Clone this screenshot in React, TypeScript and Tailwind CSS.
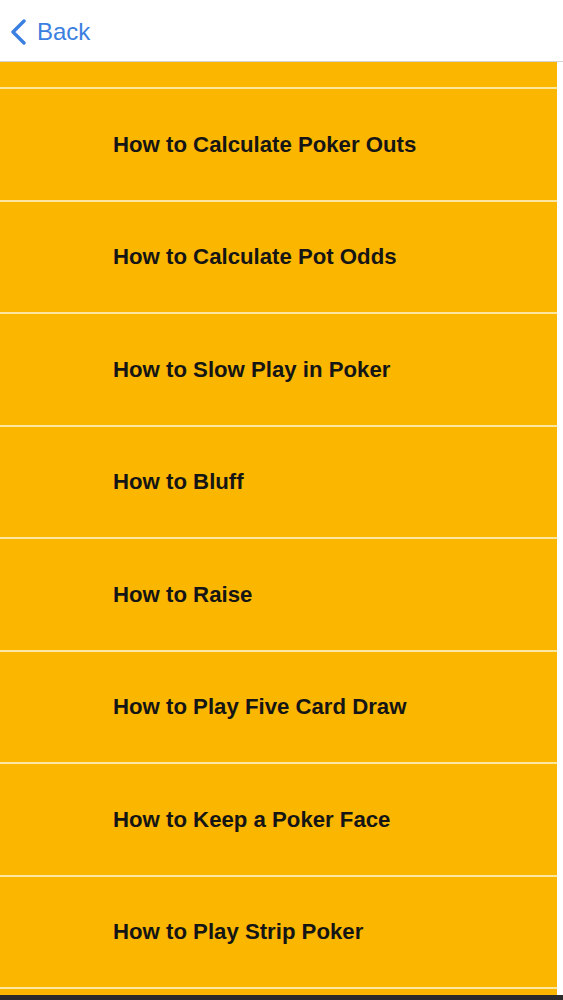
import React from "react";

const items = [
  "How to Calculate Poker Outs",
  "How to Calculate Pot Odds",
  "How to Slow Play in Poker",
  "How to Bluff",
  "How to Raise",
  "How to Play Five Card Draw",
  "How to Keep a Poker Face",
  "How to Play Strip Poker",
];

const App: React.FC = () => {
  return (
    <div className="h-[1000px] w-[563px] overflow-hidden bg-white flex flex-col font-['Liberation_Sans',Arial,sans-serif]">
      <div className="h-[62px] shrink-0 flex items-center border-b border-[#d4d4d4] bg-white">
        <button className="flex items-center gap-[10px] pl-[10px] pt-[3px] text-[#3b7fe0]">
          <svg width="17" height="26" viewBox="0 0 17 26" fill="none">
            <path d="M14 2 L3 13 L14 24" stroke="#3b7fe0" strokeWidth="3.4" strokeLinecap="round" strokeLinejoin="round" />
          </svg>
          <span className="text-[24px] leading-none">Back</span>
        </button>
      </div>

      <div className="w-[557px] flex-1 flex flex-col bg-[#fbb600]">
        <div className="h-[25px] shrink-0" />
        {items.map((label) => (
          <div
            key={label}
            className="h-[112.5px] shrink-0 border-t-2 border-[#fde7a0] flex items-center pl-[113px]"
          >
            <span className="text-[22.2px] font-bold text-[#151515]">{label}</span>
          </div>
        ))}
        <div className="h-[7px] shrink-0 border-t-2 border-[#fde7a0]" />
      </div>
      <div className="h-[5px] shrink-0 bg-[#2b2b2b]" />
    </div>
  );
};

export default App;
